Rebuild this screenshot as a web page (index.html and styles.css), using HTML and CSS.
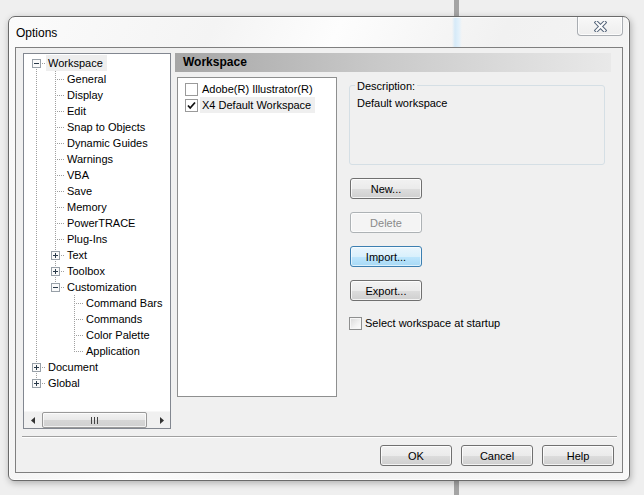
FILE: index.html
```html
<!DOCTYPE html>
<html>
<head>
<meta charset="utf-8">
<title>Options</title>
<link rel="stylesheet" href="styles.css">
</head>
<body>
<div class="bar"></div>
<div class="window">
  <div class="titlebar">
    <span class="title">Options</span>
    <div class="close">
      <svg width="13" height="11" viewBox="0 0 13 11">
        <path d="M2.5 1.5l8 8M10.5 1.5l-8 8" stroke="#55657a" stroke-width="4" stroke-linecap="square"/>
        <path d="M2.5 1.5l8 8M10.5 1.5l-8 8" stroke="#fdfdfd" stroke-width="2" stroke-linecap="square"/>
      </svg>
    </div>
  </div>
  <div class="client">
    <div class="top">
      <div class="tree">
        <div class="tree-body">
          <div class="row"><i class="c f"><svg class="box" width="9" height="9" viewBox="0 0 9 9"><rect x=".5" y=".5" width="8" height="8" fill="#fafafa" stroke="#98a0a8"/><path d="M2 4.5h5" stroke="#2a3a4a"/></svg></i><span class="lbl sel">Workspace</span></div>
          <div class="row"><i class="c v"></i><i class="c t"></i><span class="lbl">General</span></div>
          <div class="row"><i class="c v"></i><i class="c t"></i><span class="lbl">Display</span></div>
          <div class="row"><i class="c v"></i><i class="c t"></i><span class="lbl">Edit</span></div>
          <div class="row"><i class="c v"></i><i class="c t"></i><span class="lbl">Snap to Objects</span></div>
          <div class="row"><i class="c v"></i><i class="c t"></i><span class="lbl">Dynamic Guides</span></div>
          <div class="row"><i class="c v"></i><i class="c t"></i><span class="lbl">Warnings</span></div>
          <div class="row"><i class="c v"></i><i class="c t"></i><span class="lbl">VBA</span></div>
          <div class="row"><i class="c v"></i><i class="c t"></i><span class="lbl">Save</span></div>
          <div class="row"><i class="c v"></i><i class="c t"></i><span class="lbl">Memory</span></div>
          <div class="row"><i class="c v"></i><i class="c t"></i><span class="lbl">PowerTRACE</span></div>
          <div class="row"><i class="c v"></i><i class="c t"></i><span class="lbl">Plug-Ins</span></div>
          <div class="row"><i class="c v"></i><i class="c t"><svg class="box" width="9" height="9" viewBox="0 0 9 9"><rect x=".5" y=".5" width="8" height="8" fill="#fafafa" stroke="#98a0a8"/><path d="M2 4.5h5M4.5 2v5" stroke="#2a3a4a"/></svg></i><span class="lbl">Text</span></div>
          <div class="row"><i class="c v"></i><i class="c t"><svg class="box" width="9" height="9" viewBox="0 0 9 9"><rect x=".5" y=".5" width="8" height="8" fill="#fafafa" stroke="#98a0a8"/><path d="M2 4.5h5M4.5 2v5" stroke="#2a3a4a"/></svg></i><span class="lbl">Toolbox</span></div>
          <div class="row"><i class="c v"></i><i class="c l"><svg class="box" width="9" height="9" viewBox="0 0 9 9"><rect x=".5" y=".5" width="8" height="8" fill="#fafafa" stroke="#98a0a8"/><path d="M2 4.5h5" stroke="#2a3a4a"/></svg></i><span class="lbl">Customization</span></div>
          <div class="row"><i class="c v"></i><i class="c"></i><i class="c t"></i><span class="lbl">Command Bars</span></div>
          <div class="row"><i class="c v"></i><i class="c"></i><i class="c t"></i><span class="lbl">Commands</span></div>
          <div class="row"><i class="c v"></i><i class="c"></i><i class="c t"></i><span class="lbl">Color Palette</span></div>
          <div class="row"><i class="c v"></i><i class="c"></i><i class="c l"></i><span class="lbl">Application</span></div>
          <div class="row"><i class="c t"><svg class="box" width="9" height="9" viewBox="0 0 9 9"><rect x=".5" y=".5" width="8" height="8" fill="#fafafa" stroke="#98a0a8"/><path d="M2 4.5h5M4.5 2v5" stroke="#2a3a4a"/></svg></i><span class="lbl">Document</span></div>
          <div class="row"><i class="c l"><svg class="box" width="9" height="9" viewBox="0 0 9 9"><rect x=".5" y=".5" width="8" height="8" fill="#fafafa" stroke="#98a0a8"/><path d="M2 4.5h5M4.5 2v5" stroke="#2a3a4a"/></svg></i><span class="lbl">Global</span></div>
        </div>
        <div class="hscroll">
          <div class="sbtn"><svg width="4" height="7" viewBox="0 0 4 7"><path d="M4 0v7L0 3.5z" fill="#333"/></svg></div>
          <div class="thumb"><svg width="7" height="7" viewBox="0 0 7 7"><path d="M.5 0v7M3.5 0v7M6.5 0v7" stroke="#444"/></svg></div>
          <div class="track"></div>
          <div class="sbtn"><svg width="4" height="7" viewBox="0 0 4 7"><path d="M0 0v7L4 3.5z" fill="#333"/></svg></div>
        </div>
      </div>
      <div class="panel">
        <div class="panel-head">Workspace</div>
        <div class="panel-body">
          <div class="list">
            <div class="item"><span class="cb light"></span><span class="ilbl">Adobe(R) Illustrator(R)</span></div>
            <div class="item"><span class="cb light"><svg width="11" height="11" viewBox="0 0 11 11"><path d="M2 5.5l2.2 2.5L9 2.5" fill="none" stroke="#111" stroke-width="1.8"/></svg></span><span class="ilbl sel">X4 Default Workspace</span></div>
          </div>
          <div class="side">
            <div class="group">
              <span class="legend">Description:</span>
              <div class="desc">Default workspace</div>
            </div>
            <div class="btns">
              <button class="btn">New...</button>
              <button class="btn disabled">Delete</button>
              <button class="btn focus">Import...</button>
              <button class="btn">Export...</button>
            </div>
            <label class="chk"><span class="cb"></span><span>Select workspace at startup</span></label>
          </div>
        </div>
      </div>
    </div>
    <div class="sep"></div>
    <div class="footer">
      <button class="btn">OK</button>
      <button class="btn">Cancel</button>
      <button class="btn">Help</button>
    </div>
  </div>
</div>
</body>
</html>
```
FILE: styles.css
```css
* { box-sizing: border-box; }
html, body { margin: 0; padding: 0; }
body {
  width: 644px;
  height: 495px;
  overflow: hidden;
  background: #efefef;
  font-family: "Liberation Sans", Arial, sans-serif;
  font-size: 11px;
  color: #000;
  position: relative;
  padding-top: 16px;
  padding-left: 8px;
}
.bar {
  position: absolute;
  left: 454px;
  top: 0;
  width: 5px;
  height: 495px;
  background: #a4a4a4;
}
.window {
  position: relative;
  z-index: 1;
  width: 622px;
  height: 465px;
  border: 1px solid #6a6a6a;
  border-radius: 7px 7px 6px 6px;
  background:
    linear-gradient(90deg, transparent 443px, #d6eaf8 446px, #e3f1fb 450px, transparent 453px) no-repeat 0 0 / 100% 30px,
    linear-gradient(115deg, #fbfbfb 0%, #f4f4f4 25%, #fdfdfd 40%, #f1f1f1 60%, #f8f8f8 100%);
  box-shadow: 0 0 0 1px rgba(255,255,255,.7) inset, 1px 2px 7px rgba(0,0,0,.28);
  padding: 0 6px 7px 6px;
  display: flex;
  flex-direction: column;
}
.titlebar {
  height: 30px;
  flex: none;
  display: flex;
  align-items: flex-start;
  justify-content: space-between;
}
.title {
  align-self: center;
  margin-left: 1px;
  margin-top: 1px;
  font-size: 12px;
  color: #000;
}
.close {
  width: 46px;
  height: 19px;
  border: 1px solid #a9adb2;
  border-top: none;
  border-radius: 0 0 4px 4px;
  background: linear-gradient(#f8f8f8, #eeeeee);
  box-shadow: inset 0 0 0 1px rgba(255,255,255,.8);
  display: flex;
  align-items: center;
  justify-content: center;
}
.client {
  flex: 1;
  border: 1px solid #7f7f7f;
  background: #f0f0f0;
  display: flex;
  flex-direction: column;
  padding: 5px 0 0 7px;
}
.top { display: flex; }
.tree {
  width: 148px;
  height: 376px;
  border: 1px solid #828790;
  background: #fff;
  display: flex;
  flex-direction: column;
}
.tree-body {
  flex: 1;
  padding: 1px 0 0 3px;
}
.row {
  display: flex;
  height: 16px;
  align-items: center;
  white-space: nowrap;
}
.c {
  width: 19px;
  height: 16px;
  flex: none;
  display: flex;
  align-items: center;
  background-repeat: no-repeat;
}
.box { margin-left: 5px; display: block; }
.v {
  background-image: repeating-linear-gradient(#a0a0a0 0 1px, transparent 1px 2px);
  background-size: 1px 16px;
  background-position: 9px 0;
}
.t {
  background-image: repeating-linear-gradient(#a0a0a0 0 1px, transparent 1px 2px),
                    repeating-linear-gradient(90deg, #a0a0a0 0 1px, transparent 1px 2px);
  background-size: 1px 16px, 10px 1px;
  background-position: 9px 0, 9px 8px;
}
.l {
  background-image: repeating-linear-gradient(#a0a0a0 0 1px, transparent 1px 2px),
                    repeating-linear-gradient(90deg, #a0a0a0 0 1px, transparent 1px 2px);
  background-size: 1px 9px, 10px 1px;
  background-position: 9px 0, 9px 8px;
}
.f {
  background-image: repeating-linear-gradient(#a0a0a0 0 1px, transparent 1px 2px),
                    repeating-linear-gradient(90deg, #a0a0a0 0 1px, transparent 1px 2px);
  background-size: 1px 8px, 10px 1px;
  background-position: 9px 8px, 9px 8px;
}
.lbl {
  line-height: 16px;
  padding: 0 2px;
}
.lbl.sel { background: #eeeeee; padding-right: 4px; }
.hscroll {
  height: 17px;
  flex: none;
  display: flex;
  background: #f0f0f0;
  border-top: 1px solid #f7f7f7;
}
.sbtn {
  width: 17px;
  flex: none;
  display: flex;
  align-items: center;
  justify-content: center;
}
.thumb {
  width: 105px;
  flex: none;
  margin: 0 1px;
  border: 1px solid #999;
  border-radius: 2px;
  background: linear-gradient(#f3f3f3, #e8e8e8 50%, #d6d6d6 51%, #d0d0d0);
  box-shadow: inset 0 0 0 1px rgba(255,255,255,.7);
  display: flex;
  align-items: center;
  justify-content: center;
}
.track { flex: 1; }
.panel {
  width: 436px;
  margin-left: 4px;
  display: flex;
  flex-direction: column;
}
.panel-head {
  height: 19px;
  background: linear-gradient(90deg, #a6a6a6, #c8c8c8 45%, #e9e9e9);
  font-weight: bold;
  font-size: 12px;
  line-height: 19px;
  padding-left: 8px;
}
.panel-body {
  display: flex;
  margin-top: 5px;
}
.list {
  width: 160px;
  height: 320px;
  margin-left: 2px;
  border: 1px solid #8e8f8f;
  background: #fff;
  padding: 3px 0 0 7px;
}
.item {
  display: flex;
  align-items: center;
  height: 16px;
  white-space: nowrap;
}
.cb {
  width: 13px;
  height: 13px;
  flex: none;
  border: 1px solid #8e8f8f;
  background: linear-gradient(135deg, #d8d8d8, #f2f2f2 60%, #fdfdfd);
  box-shadow: inset 0 0 0 1px #f6f6f6;
  display: flex;
  align-items: center;
  justify-content: center;
}
.cb.light {
  border-color: #9a9a9a;
  background: #fff;
  box-shadow: none;
}
.ilbl {
  margin-left: 2px;
  padding: 0 2px;
  line-height: 16px;
}
.ilbl.sel { background: #efefef; width: 115px; }
.side {
  margin-left: 12px;
  display: flex;
  flex-direction: column;
}
.group {
  width: 256px;
  height: 80px;
  margin-top: 8px;
  border: 1px solid #d5dfe5;
  border-radius: 3px;
  padding: 0 7px;
}
.legend {
  display: block;
  width: fit-content;
  margin: -6px 0 0 -2px;
  padding: 0 2px;
  line-height: 13px;
  background: #f0f0f0;
}
.desc {
  margin-top: 4px;
  line-height: 13px;
}
.btns {
  display: flex;
  flex-direction: column;
  gap: 13px;
  margin-top: 13px;
  margin-left: 1px;
}
.btn {
  width: 72px;
  height: 21px;
  padding: 0;
  font-family: "Liberation Sans", Arial, sans-serif;
  font-size: 11px;
  color: #000;
  border: 1px solid #707070;
  border-radius: 3px;
  background: linear-gradient(#f2f2f2, #ebebeb 50%, #dddddd 51%, #cfcfcf);
  box-shadow: inset 0 0 0 1px rgba(255,255,255,.75);
}
.btn.disabled {
  color: #8a8a8a;
  border-color: #adb2b5;
  background: #f4f4f4;
}
.btn.focus {
  border-color: #3c7fb1;
  background: linear-gradient(#eaf6fd, #d9f0fc 50%, #bee6fd 51%, #a7d9f5);
  box-shadow: inset 0 0 0 1px rgba(255,255,255,.6);
}
.chk {
  display: flex;
  align-items: center;
  margin-top: 16px;
  gap: 3px;
  line-height: 13px;
}
.sep {
  height: 2px;
  margin: 7px 5px 0 -1px;
  border-top: 1px solid #a0a0a0;
  border-bottom: 1px solid #ffffff;
}
.footer {
  display: flex;
  justify-content: flex-end;
  gap: 9px;
  padding-right: 8px;
  margin-top: 7px;
}
```
